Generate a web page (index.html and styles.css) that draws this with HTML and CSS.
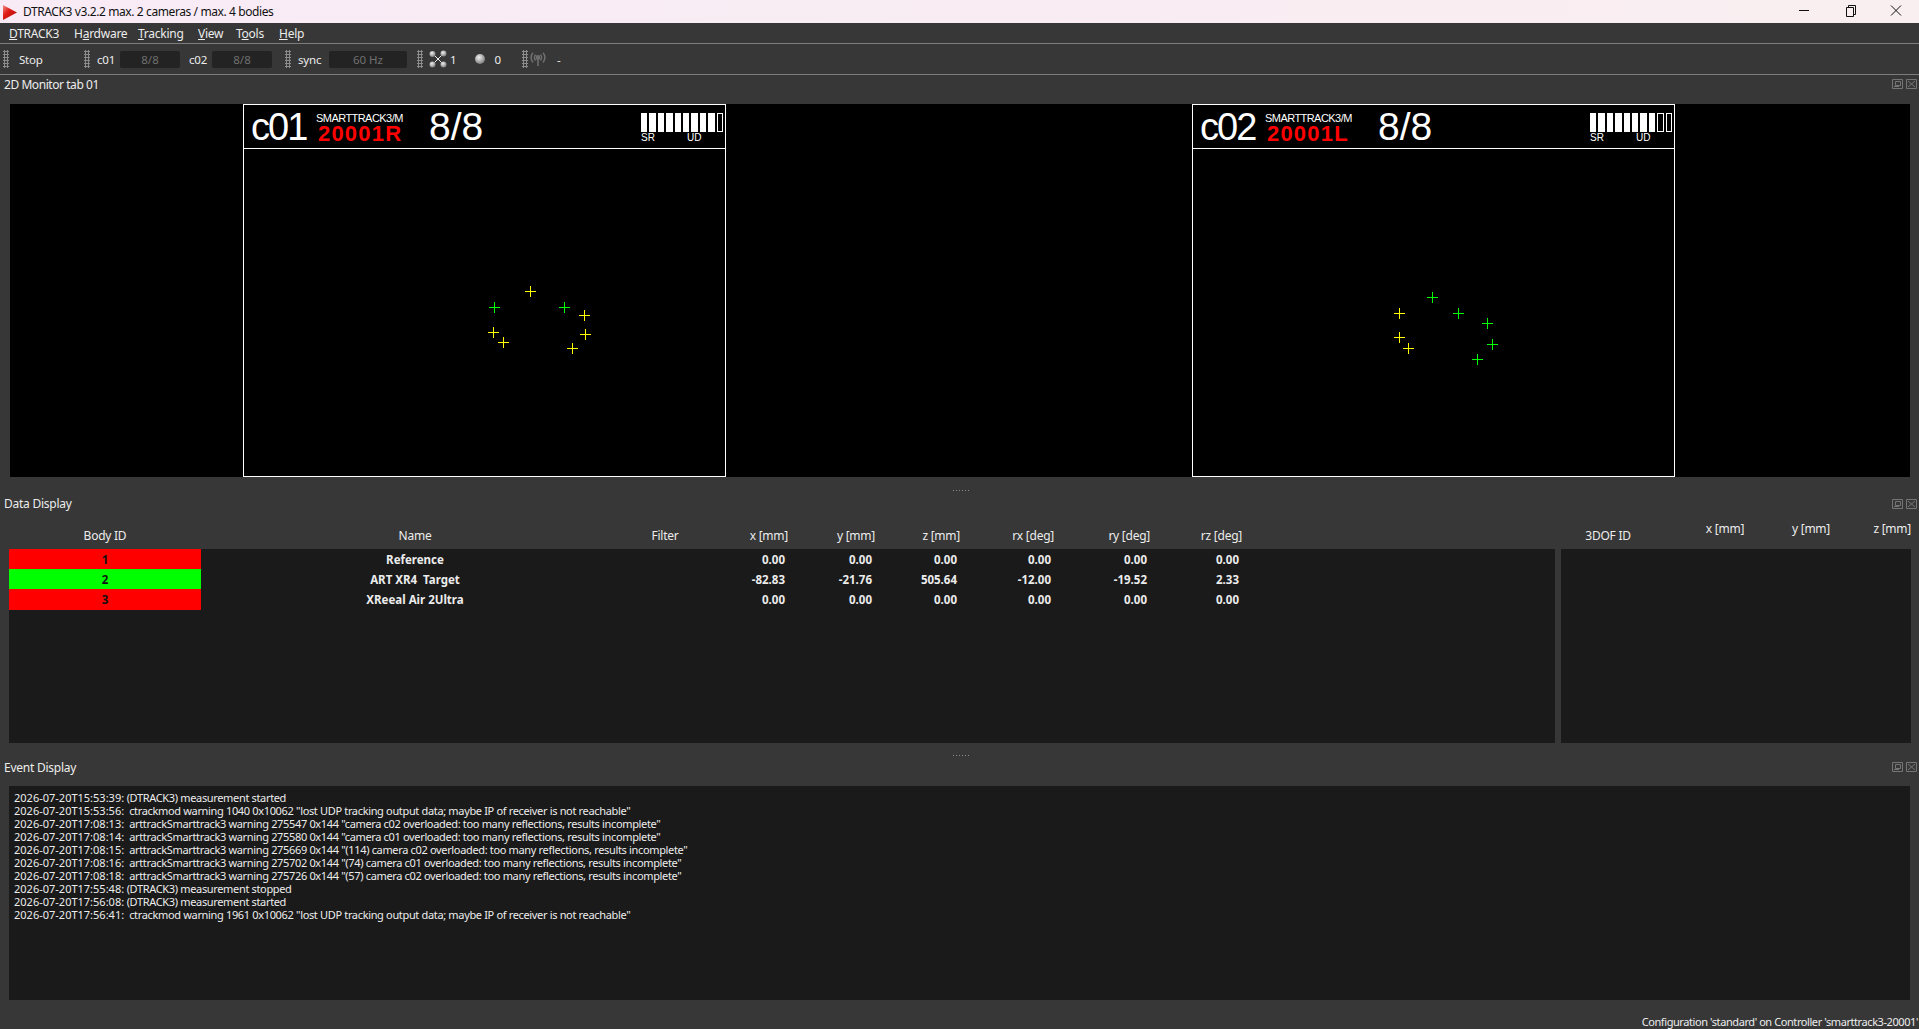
FILE: index.html
```html
<!DOCTYPE html>
<html lang="en">

<head>
    <meta charset="UTF-8">
    <title>DTRACK3</title>
    <link rel="stylesheet" href="styles.css">
</head>

<body>
    <!-- Window title bar -->
    <div class="titlebar">
        <svg class="app-logo" width="18" height="19" viewBox="0 0 18 19">
            <defs>
                <linearGradient id="logoFill" x1="0" y1="0" x2="1" y2="1">
                    <stop offset="0" stop-color="#f0908a" />
                    <stop offset="0.4" stop-color="#e01a14" />
                    <stop offset="1" stop-color="#a80c0a" />
                </linearGradient>
            </defs>
            <polygon points="3,3 17,10.500 3,18" fill="url(#logoFill)" />
        </svg>
        <span class="app-title">DTRACK3 v3.2.2 max. 2 cameras / max. 4 bodies</span>
        <div class="window-buttons">
            <svg width="46" height="23" viewBox="0 0 46 23"><path d="M18 10.5h10" stroke="#111" /></svg>
            <svg width="46" height="23" viewBox="0 0 46 23"><path d="M19.5 7.5h7v9h-7zM21.5 7.500v-2h7v9h-2" fill="none" stroke="#111" /></svg>
            <svg width="46" height="23" viewBox="0 0 46 23"><path d="M18 5.5l10 10M28 5.5l-10 10" stroke="#111" /></svg>
        </div>
    </div>

    <!-- Menu -->
    <div class="menubar">
        <span class="menu-item m-dtrack"><u>D</u>TRACK3</span>
        <span class="menu-item m-hardware">H<u>a</u>rdware</span>
        <span class="menu-item m-tracking"><u>T</u>racking</span>
        <span class="menu-item m-view"><u>V</u>iew</span>
        <span class="menu-item m-tools">T<u>o</u>ols</span>
        <span class="menu-item m-help"><u>H</u>elp</span>
    </div>

    <!-- Toolbar -->
    <div class="toolbar">
        <div class="tool-group group-stop">
            <div class="grip"></div>
            <span class="tool-label stop-label">Stop</span>
        </div>
        <div class="tool-group group-cams">
            <div class="grip"></div>
            <span class="tool-label cam-label">c01</span>
            <div class="tool-field cam-field">8/8</div>
            <span class="tool-label cam-label second">c02</span>
            <div class="tool-field cam-field">8/8</div>
        </div>
        <div class="tool-group group-sync">
            <div class="grip"></div>
            <span class="tool-label sync-label">sync</span>
            <div class="tool-field sync-field">60 Hz</div>
        </div>
        <div class="tool-group group-count">
            <div class="grip"></div>
            <svg class="nodes-icon" width="18" height="18" viewBox="0 0 18 18">
                <defs>
                    <radialGradient id="ball" cx="0.4" cy="0.35" r="0.7">
                        <stop offset="0" stop-color="#f0f0f0" />
                        <stop offset="1" stop-color="#777" />
                    </radialGradient>
                </defs>
                <path d="M4 14L14 4M4 4l10 10" stroke="#eee" />
                <circle cx="3.5" cy="4" r="3" fill="url(#ball)" />
                <circle cx="14.5" cy="3.5" r="3" fill="url(#ball)" />
                <circle cx="3.5" cy="14.5" r="3" fill="url(#ball)" />
                <circle cx="14.5" cy="14.5" r="3" fill="url(#ball)" />
            </svg>
            <span class="tool-label count-one">1</span>
            <svg class="ball-icon" width="10" height="10" viewBox="0 0 10 10">
                <circle cx="5" cy="5" r="5" fill="url(#ball)" />
            </svg>
            <span class="tool-label count-zero">0</span>
        </div>
        <div class="tool-group">
            <div class="grip"></div>
            <svg class="antenna-icon" width="16" height="16" viewBox="0 0 16 16" fill="none" stroke="#6e6e6e" stroke-width="1.6">
                <circle cx="8" cy="6.5" r="1.6" fill="#6e6e6e" />
                <path d="M8 7v8M5.6 3.8a4 4 0 0 0 0 5.6M10.4 3.800a4 4 0 0 1 0 5.6M3 1.800a7 7 0 0 0 0 9.6M13 1.800a7 7 0 0 1 0 9.6" />
            </svg>
            <span class="tool-label dash-label">-</span>
        </div>
    </div>

    <!-- 2D monitor -->
    <div class="dock-title monitor-title">
        <span>2D Monitor tab 01</span>
        <div class="dock-icons">
            <svg width="11" height="10" viewBox="0 0 11 10"><path d="M.5.5h10v9H.5zM3.5 2.5h5v4h-5zM2 7.5h5" /></svg>
            <svg width="11" height="10" viewBox="0 0 11 10"><path d="M.5.5h10v9H.5zM2 2l7 6M9 2L2 8" /></svg>
        </div>
    </div>
    <div class="monitor">
        <div class="cam-view">
            <div class="cam-head">
                <span class="cam-name">c01</span>
                <div class="cam-model">
                    <div class="cam-type">SMARTTRACK3/M</div>
                    <div class="cam-serial">20001R</div>
                </div>
                <span class="cam-count">8/8</span>
                <div class="cam-signal">
                    <div class="signal-bars">
                        <i></i><i></i><i></i><i></i><i></i><i></i><i></i><i></i><i></i><i class="off"></i>
                    </div>
                    <div class="signal-labels"><span>SR</span><span class="ud">UD</span></div>
                </div>
            </div>
            <svg class="cam-plot" width="481" height="327" viewBox="0 0 481 327">
                <defs>
                    <path id="mark" d="M-5 .5h11M.5-5v11" />
                </defs>
                <g class="mark-yellow">
                    <use href="#mark" x="286" y="142" />
                    <use href="#mark" x="340" y="166" />
                    <use href="#mark" x="341" y="185" />
                    <use href="#mark" x="249" y="183" />
                    <use href="#mark" x="259" y="193" />
                    <use href="#mark" x="328" y="199" />
                </g>
                <g class="mark-green">
                    <use href="#mark" x="250" y="158" />
                    <use href="#mark" x="320" y="158" />
                </g>
            </svg>
        </div>
        <div class="cam-view second-cam">
            <div class="cam-head">
                <span class="cam-name">c02</span>
                <div class="cam-model">
                    <div class="cam-type">SMARTTRACK3/M</div>
                    <div class="cam-serial">20001L</div>
                </div>
                <span class="cam-count">8/8</span>
                <div class="cam-signal">
                    <div class="signal-bars">
                        <i></i><i></i><i></i><i></i><i></i><i></i><i></i><i></i><i class="off"></i><i class="off"></i>
                    </div>
                    <div class="signal-labels"><span>SR</span><span class="ud">UD</span></div>
                </div>
            </div>
            <svg class="cam-plot" width="481" height="327" viewBox="0 0 481 327">
                <g class="mark-green">
                    <use href="#mark" x="239" y="148" />
                    <use href="#mark" x="265" y="164" />
                    <use href="#mark" x="294" y="174" />
                    <use href="#mark" x="299" y="195" />
                    <use href="#mark" x="284" y="210" />
                </g>
                <g class="mark-yellow">
                    <use href="#mark" x="206" y="164" />
                    <use href="#mark" x="206" y="188" />
                    <use href="#mark" x="215" y="199" />
                </g>
            </svg>
        </div>
    </div>

    <div class="splitter"><div class="split-grip"></div></div>

    <!-- Data display -->
    <div class="dock-title data-title">
        <span>Data Display</span>
        <div class="dock-icons">
            <svg width="11" height="10" viewBox="0 0 11 10"><path d="M.5.5h10v9H.5zM3.5 2.5h5v4h-5zM2 7.5h5" /></svg>
            <svg width="11" height="10" viewBox="0 0 11 10"><path d="M.5.5h10v9H.5zM2 2l7 6M9 2L2 8" /></svg>
        </div>
    </div>
    <div class="data-area">
        <div class="bodies">
            <div class="body-grid body-head">
                <div class="center">Body ID</div>
                <div class="center">Name</div>
                <div class="center">Filter</div>
                <div class="num">x [mm]</div>
                <div class="num">y [mm]</div>
                <div class="num">z [mm]</div>
                <div class="num">rx [deg]</div>
                <div class="num">ry [deg]</div>
                <div class="num">rz [deg]</div>
            </div>
            <div class="body-rows">
                <div class="body-grid body-row">
                    <div class="center id-cell lost">1</div>
                    <div class="center">Reference</div>
                    <div></div>
                    <div class="num">0.00</div>
                    <div class="num">0.00</div>
                    <div class="num">0.00</div>
                    <div class="num">0.00</div>
                    <div class="num">0.00</div>
                    <div class="num">0.00</div>
                </div>
                <div class="body-grid body-row">
                    <div class="center id-cell found">2</div>
                    <div class="center keep-space">ART XR4  Target</div>
                    <div></div>
                    <div class="num">-82.83</div>
                    <div class="num">-21.76</div>
                    <div class="num">505.64</div>
                    <div class="num">-12.00</div>
                    <div class="num">-19.52</div>
                    <div class="num">2.33</div>
                </div>
                <div class="body-grid body-row">
                    <div class="center id-cell lost">3</div>
                    <div class="center">XReeal Air 2Ultra</div>
                    <div></div>
                    <div class="num">0.00</div>
                    <div class="num">0.00</div>
                    <div class="num">0.00</div>
                    <div class="num">0.00</div>
                    <div class="num">0.00</div>
                    <div class="num">0.00</div>
                </div>
            </div>
        </div>
        <div class="dof">
            <div class="dof-head">
                <div class="dof-id">3DOF ID</div>
                <div class="dof-col dof-x">x [mm]</div>
                <div class="dof-col dof-y">y [mm]</div>
                <div class="dof-col dof-z">z [mm]</div>
            </div>
            <div class="dof-rows"></div>
        </div>
    </div>

    <div class="splitter lower"><div class="split-grip"></div></div>

    <!-- Event display -->
    <div class="dock-title event-title">
        <span>Event Display</span>
        <div class="dock-icons">
            <svg width="11" height="10" viewBox="0 0 11 10"><path d="M.5.5h10v9H.5zM3.5 2.5h5v4h-5zM2 7.5h5" /></svg>
            <svg width="11" height="10" viewBox="0 0 11 10"><path d="M.5.5h10v9H.5zM2 2l7 6M9 2L2 8" /></svg>
        </div>
    </div>
    <div class="event-log">
        <div><span class="stamp">2026-07-20T15:53:39:</span> (DTRACK3) measurement started</div>
        <div><span class="stamp">2026-07-20T15:53:56:</span>  ctrackmod warning 1040 0x10062 "lost UDP tracking output data; maybe IP of receiver is not reachable"</div>
        <div><span class="stamp">2026-07-20T17:08:13:</span>  arttrackSmarttrack3 warning 275547 0x144 "camera c02 overloaded: too many reflections, results incomplete"</div>
        <div><span class="stamp">2026-07-20T17:08:14:</span>  arttrackSmarttrack3 warning 275580 0x144 "camera c01 overloaded: too many reflections, results incomplete"</div>
        <div><span class="stamp">2026-07-20T17:08:15:</span>  arttrackSmarttrack3 warning 275669 0x144 "(114) camera c02 overloaded: too many reflections, results incomplete"</div>
        <div><span class="stamp">2026-07-20T17:08:16:</span>  arttrackSmarttrack3 warning 275702 0x144 "(74) camera c01 overloaded: too many reflections, results incomplete"</div>
        <div><span class="stamp">2026-07-20T17:08:18:</span>  arttrackSmarttrack3 warning 275726 0x144 "(57) camera c02 overloaded: too many reflections, results incomplete"</div>
        <div><span class="stamp">2026-07-20T17:55:48:</span> (DTRACK3) measurement stopped</div>
        <div><span class="stamp">2026-07-20T17:56:08:</span> (DTRACK3) measurement started</div>
        <div><span class="stamp">2026-07-20T17:56:41:</span>  ctrackmod warning 1961 0x10062 "lost UDP tracking output data; maybe IP of receiver is not reachable"</div>
    </div>

    <div class="statusbar">Configuration 'standard' on Controller 'smarttrack3-20001'</div>
</body>

</html>
```

FILE: styles.css
```css
/* Main window */
* {
    box-sizing: border-box;
}

body {
    margin: 0;
    width: 1919px;
    height: 1029px;
    overflow: hidden;
    background-color: #373737;
    color: #ececec;
    font-family: "Noto Sans", sans-serif;
    font-size: 11px;
}

/* Title bar */
.titlebar {
    height: 23px;
    display: flex;
    align-items: center;
    background: linear-gradient(to right, #f8ebf6, #f9eef0);
    color: #111;
}

.app-logo {
    flex: none;
}

.app-title {
    margin-left: 5px;
    font-size: 12px;
    letter-spacing: -0.4px;
}

.window-buttons {
    margin-left: auto;
    display: flex;
}

/* Menu */
.menubar {
    height: 21px;
    display: flex;
    align-items: center;
    padding-left: 9px;
    border-bottom: 1px solid #7c7c7c;
    font-size: 12px;
    letter-spacing: -0.25px;
}

.menu-item {
    flex: none;
}

.m-dtrack { width: 65px; }
.m-hardware { width: 64px; }
.m-tracking { width: 60px; }
.m-view { width: 38px; }
.m-tools { width: 43px; }

/* Toolbar */
.toolbar {
    height: 31px;
    display: flex;
    align-items: center;
    padding-left: 3px;
    border-bottom: 1px solid #7c7c7c;
}

.tool-group {
    display: flex;
    align-items: center;
    flex: none;
}

.group-stop { width: 81px; }
.group-cams { width: 201px; }
.group-sync { width: 132px; }
.group-count { width: 105px; }

.grip {
    width: 6px;
    height: 18px;
    flex: none;
    background-image: radial-gradient(#8c8c8c 1.2px, transparent 1.2px);
    background-size: 3px 3px;
}

.tool-label {
    flex: none;
    font-size: 11.5px;
    letter-spacing: -0.2px;
}

.stop-label {
    margin-left: 10px;
}

.cam-label {
    width: 23px;
    margin-left: 7px;
}

.cam-label.second {
    margin-left: 9px;
}

.tool-field {
    height: 17px;
    line-height: 17px;
    background-color: #232323;
    border-radius: 2px;
    text-align: center;
    color: #6f6f6f;
    font-size: 11.5px;
}

.cam-field {
    width: 60px;
}

.sync-label {
    width: 31px;
    margin-left: 7px;
}

.sync-field {
    width: 78px;
}

.nodes-icon {
    margin-left: 6px;
}

.count-one {
    margin-left: 3px;
}

.ball-icon {
    margin-left: 19px;
}

.count-zero {
    margin-left: 9px;
}

.antenna-icon {
    margin-left: 2px;
}

.dash-label {
    margin-left: 11px;
}

/* Dock titles */
.dock-title {
    display: flex;
    justify-content: space-between;
    padding-left: 4px;
    padding-right: 2px;
    font-size: 12px;
    letter-spacing: -0.25px;
}

.monitor-title {
    height: 29px;
    padding-top: 1px;
    letter-spacing: -0.44px;
}

.data-title {
    height: 23px;
    align-items: center;
}

.event-title {
    height: 30px;
    padding-top: 3px;
}

.dock-icons {
    display: flex;
    gap: 3px;
    padding-top: 3px;
}

.data-title .dock-icons {
    padding-top: 0;
}

.dock-icons svg {
    fill: none;
    stroke: #757575;
}

/* 2D monitor */
.monitor {
    height: 373px;
    margin-left: 10px;
    width: 1900px;
    display: flex;
    padding-left: 233px;
    background-color: #000;
}

.cam-view {
    width: 483px;
    height: 373px;
    border: 1px solid #fff;
    color: #fff;
    font-family: "Liberation Sans", sans-serif;
}

.second-cam {
    margin-left: 466px;
}

.cam-head {
    height: 44px;
    display: flex;
    border-bottom: 1px solid #fff;
}

.cam-name {
    width: 72px;
    padding-left: 7px;
    font-size: 38px;
    line-height: 44px;
    letter-spacing: -2px;
}

.cam-model {
    width: 113px;
    padding-top: 8px;
}

.cam-type {
    font-size: 11px;
    line-height: 11px;
    letter-spacing: -0.55px;
}

.cam-serial {
    padding-left: 2px;
    color: #f00;
    font-size: 22px;
    font-weight: bold;
    line-height: 20px;
    letter-spacing: 1.2px;
}

.cam-count {
    font-size: 39px;
    line-height: 44px;
}

.cam-signal {
    margin-left: auto;
    width: 84px;
    padding-top: 8px;
}

.signal-bars {
    display: flex;
    gap: 2px;
    height: 19px;
}

.signal-bars i {
    width: 6.4px;
    background-color: #fff;
}

.signal-bars i.off {
    background: none;
    border: 1px solid #fff;
}

.signal-labels {
    display: flex;
    font-size: 10px;
    line-height: 12px;
}

.signal-labels .ud {
    margin-left: 32px;
}

.cam-plot {
    display: block;
}

.cam-plot path {
    fill: none;
    stroke-width: 1;
}

.mark-yellow { stroke: #ff0; }
.mark-green { stroke: #0f0; }

/* Splitters */
.splitter {
    height: 15px;
    padding-top: 12px;
}

.splitter.lower {
    height: 13px;
    padding-top: 11px;
}

.split-grip {
    width: 17px;
    height: 3px;
    margin-left: 952px;
    background-image: radial-gradient(#8c8c8c 0.8px, transparent 0.8px);
    background-size: 3px 3px;
}

/* Data display */
.data-area {
    display: flex;
    gap: 6px;
    height: 228px;
    padding-left: 9px;
}

.bodies {
    width: 1546px;
}

.body-grid {
    display: grid;
    grid-template-columns: 192px 428px 72px 90px 87px 85px 94px 96px 92px;
}

.body-head {
    height: 34px;
    align-items: end;
    padding-bottom: 5px;
    font-size: 12px;
    letter-spacing: -0.25px;
}

.body-head .num {
    padding-right: 3px;
}

.body-rows {
    height: 194px;
    background-color: #1a1a1a;
}

.body-row {
    height: 20px;
    line-height: 21px;
    font-size: 11.5px;
    font-weight: bold;
}

.body-row .num {
    padding-right: 6px;
}

.center {
    text-align: center;
}

.num {
    text-align: right;
}

.keep-space {
    white-space: pre;
}

.id-cell {
    color: #111;
}

.lost {
    background-color: #f00;
}

.found {
    background-color: #0f0;
}

.dof {
    width: 350px;
}

.dof-head {
    height: 34px;
    display: flex;
    font-size: 12px;
    letter-spacing: -0.25px;
}

.dof-id {
    flex: none;
    width: 94px;
    padding-top: 12px;
    text-align: center;
}

.dof-col {
    flex: none;
    padding-top: 5px;
    text-align: center;
}

.dof-x { width: 86px; margin-left: 27px; }
.dof-y { width: 86px; }
.dof-z { width: 57px; text-align: right; }

.dof-rows {
    height: 194px;
    background-color: #1a1a1a;
}

/* Event display */
.event-log {
    height: 214px;
    width: 1901px;
    margin-left: 9px;
    padding: 5px 0 0 5px;
    background-color: #1a1a1a;
    line-height: 13px;
    letter-spacing: -0.34px;
}

.event-log div {
    white-space: pre;
}

.stamp {
    letter-spacing: 0;
}

/* Status bar */
.statusbar {
    height: 29px;
    padding-top: 16px;
    padding-right: 1px;
    text-align: right;
    line-height: 12px;
    letter-spacing: -0.42px;
}
```
